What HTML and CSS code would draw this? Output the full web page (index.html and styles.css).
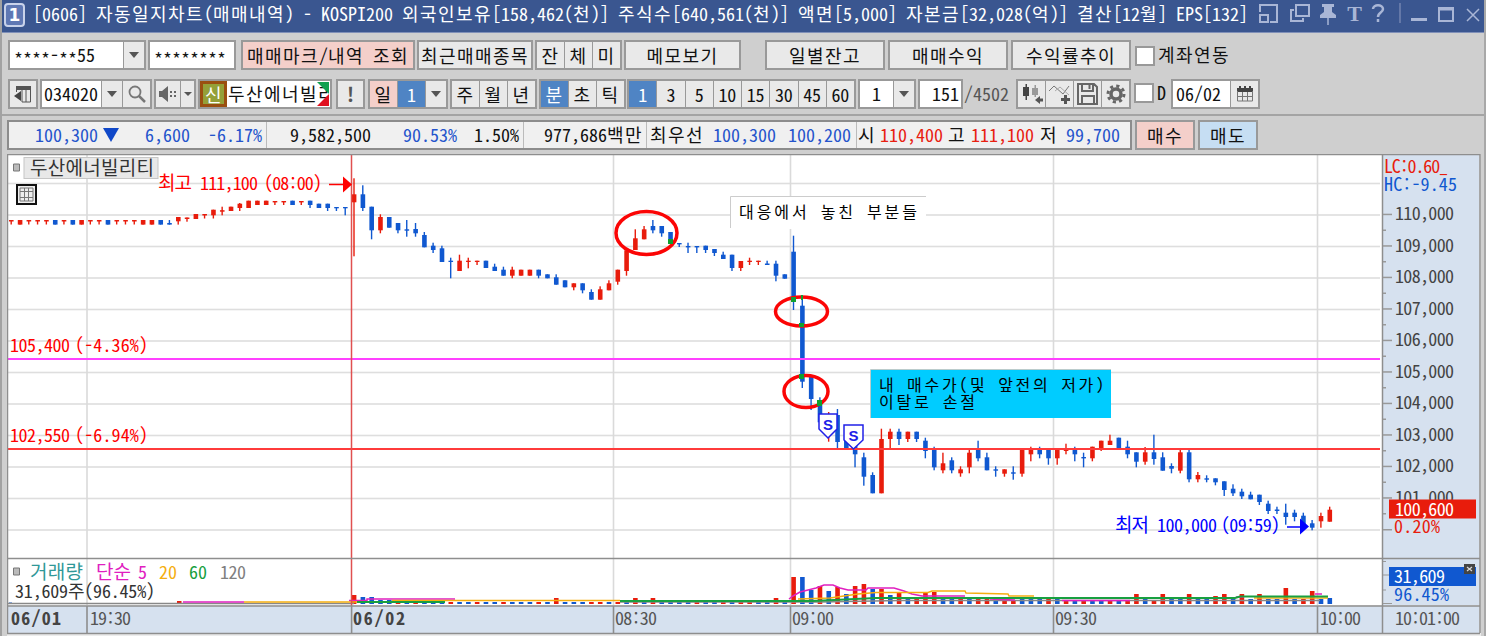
FILE: index.html
```
<!DOCTYPE html>
<html lang="ko">
<head>
  <meta charset="UTF-8">
  <title>자동일지차트(매매내역)</title>
  <link rel="stylesheet" href="styles.css">
</head>
<body>
  <div class="window">
    <!-- Title bar -->
    <header class="titlebar">
      <span class="win-no">1</span>
      <span class="title">[0606] 자동일지차트(매매내역) - KOSPI200 외국인보유[158,462(천)] 주식수[640,561(천)] 액면[5,000] 자본금[32,028(억)] 결산[12월] EPS[132]</span>
      <svg class="title-icons" width="228" height="32" viewBox="1258 0 228 32">
        <g fill="none" stroke="#a9b6d6" stroke-width="2">
          <path d="M1260 12V5h17v17h-7M1260 15h8v7h-8z"/>
          <path d="M1296 5h13v11h-13zM1294 10h-3v11h12v-3"/>
          <path d="M1328 17v8" stroke-width="1.5"/>
          <path d="M1373 9c0-5 10-5 10 0 0 4-5 3-5 8M1378 19v3" stroke-width="2.5"/>
          <path d="M1400 3v20" stroke="#7384b0" stroke-width="1.5"/>
          <path d="M1411 19.5h16" stroke-width="3"/>
          <path d="M1439 8h14v13h-14zM1439 9.500h14" />
          <path d="M1467 9l12 12M1479 9l-12 12" stroke-width="1.5"/>
        </g>
        <path fill="#a9b6d6" d="M1322 4h12v3h-2v5l4 3v3h-16v-3l4-3V7h-2z"/>
        <text class="title-t" x="1354.500" y="21">T</text>
      </svg>
    </header>

    <!-- Account row -->
    <div class="bar account-bar">
      <div class="group combo-account"><span class="field"><span class="stars">****</span>-<span class="stars">**</span>55</span><span class="drop"></span></div>
      <div class="group password"><span class="field"><span class="stars">********</span></span></div>
      <button class="btn pink w174">매매마크/내역 조회</button>
      <button class="btn w116">최근매매종목</button>
      <div class="group w87"><span class="cell">잔</span><span class="cell">체</span><span class="cell">미</span></div>
      <button class="btn w117">메모보기</button>
      <button class="btn w120 push">일별잔고</button>
      <button class="btn w120">매매수익</button>
      <button class="btn w120">수익률추이</button>
      <span class="check"></span><span class="check-label">계좌연동</span>
    </div>

    <!-- Chart tools row -->
    <div class="bar tool-bar">
      <div class="group w30"><span class="cell">
        <svg width="20" height="20" viewBox="0 0 20 20"><path d="M3 2h15v4H3z" fill="#555"/><path d="M3.500 8v-4M9 6v12M13 6v12M17.500 3v15H9" stroke="#555" fill="none"/><path d="M8 7v10l-7-5z" fill="#444"/></svg>
      </span></div>
      <div class="group code"><span class="field">034020</span><span class="drop"></span><span class="cell search">
        <svg width="20" height="20" viewBox="0 0 20 20"><circle cx="8" cy="8" r="5.500" fill="none" stroke="#777" stroke-width="1.800"/><path d="M12 12l6 6" stroke="#777" stroke-width="2.500"/></svg>
      </span></div>
      <div class="group sound"><span class="cell">
        <svg width="18" height="18" viewBox="0 0 18 18"><path d="M0 6h3l6-5v16l-6-5H0z" fill="#666"/><path d="M11 6h2v2h-2zM15 6h2v2h-2zM11 10h2v2h-2zM15 10h2v2h-2z" fill="#666"/></svg>
      </span><span class="drop small"></span></div>
      <div class="group stock"><span class="credit">신</span><span class="stock-name">두산에너빌리</span><i class="corner up"></i><i class="corner down"></i></div>
      <div class="group alert"><span class="cell">!</span></div>
      <div class="group day"><span class="cell pink">일</span><span class="cell on">1</span><span class="drop"></span></div>
      <div class="group w87"><span class="cell">주</span><span class="cell">월</span><span class="cell">년</span></div>
      <div class="group w87"><span class="cell on">분</span><span class="cell">초</span><span class="cell">틱</span></div>
      <div class="group minutes"><span class="cell on">1</span><span class="cell">3</span><span class="cell">5</span><span class="cell">10</span><span class="cell">15</span><span class="cell">30</span><span class="cell">45</span><span class="cell">60</span></div>
      <div class="group unit"><span class="field center">1</span><span class="drop"></span></div>
      <div class="group count"><span class="field right">151</span></div>
      <span class="total">/4502</span>
      <div class="group icons">
        <span class="cell"><svg width="24" height="24" viewBox="0 0 24 24"><path d="M3 5h6v9H3zM5.500 2h1.500v16H5.500z" fill="#444"/><path d="M12 6h6v7h-6zM14.500 3h1.500v12h-1.500z" fill="#999"/><path d="M15 18l5-4v2.500h3v3h-3V22z" fill="#555"/></svg></span>
        <span class="cell"><svg width="24" height="24" viewBox="0 0 24 24"><path d="M1 9l5-5 9 8 6-8" fill="none" stroke="#777"/><path d="M7 9l5-4 9 8" fill="none" stroke="#aaa"/><path d="M16 13h3v3h3v3h-3v3h-3v-3h-3v-3h3z" fill="#555"/></svg></span>
        <span class="cell"><svg width="24" height="24" viewBox="0 0 24 24"><path d="M2 2h16l3 3v17H2zM6 2v7h11V2M6 22v-8h12v8M13.500 3v4" fill="none" stroke="#666" stroke-width="2"/></svg></span>
        <span class="cell"><svg width="22" height="22" viewBox="0 0 22 22"><circle cx="11" cy="11" r="5" fill="none" stroke="#666" stroke-width="3.500"/><circle cx="11" cy="11" r="8" fill="none" stroke="#666" stroke-width="3" stroke-dasharray="3.140 3.140"/></svg></span>
      </div>
      <span class="check"></span><span class="check-label d">D</span>
      <div class="group date"><span class="field">06/02</span><span class="cell cal">
        <svg width="18" height="18" viewBox="0 0 18 18"><path d="M1 3h16v4H1zM3 1h2v3H3zM8 1h2v3H8zM13 1h2v3h-2z" fill="#444"/><path d="M1.500 6v10h15V6M6.500 7v9M11.500 7v9M2 11.500h14" fill="none" stroke="#777"/></svg>
      </span></div>
    </div>

    <!-- Quote row -->
    <div class="bar quote-bar">
      <div class="quotes">
        <span class="down">100,300</span><span class="tri"></span><span class="down">6,600</span><span class="down">-6.17%</span>
        <span class="sep">9,582,500</span><span class="down">90.53%</span><span>1.50%</span>
        <span class="sep amount">977,686백만</span>
        <span class="sep first">최우선</span><span class="down">100,300</span><span class="down">100,200</span>
        <span class="sep none">시</span><span class="up">110,400</span><span>고</span><span class="up">111,100</span><span>저</span><span class="down">99,700</span>
      </div>
      <button class="btn pink w60">매수</button>
      <button class="btn sky w60">매도</button>
    </div>

    <!-- Chart: user units are window pixels -->
    <svg class="chart" width="1474" height="482" viewBox="7 154 1474 482">
      <rect x="7" y="154" width="1474" height="482" fill="#ececec"/>
      <rect x="8" y="155" width="1374" height="450" fill="#fff"/>
      <rect x="1382" y="155" width="97" height="450" fill="#d6e1ef"/>
      <rect x="8" y="606" width="1471" height="27" fill="#d6e1ef"/>
      <g id="grid"></g>
      <g id="volume"></g>
      <g fill="none" stroke-width="1.500">
        <path stroke="#888" d="M8 603.500H354M620 602H820L900 600.500H1320"/>
        <path stroke="#e020c0" d="M183 602H244M349 600.500H367V599H455M789 599l4-3 7-4 8-2 8-2 8-3h9l7 3 8 2h18l2-2h26l10 3 8 3 10 2h43M990 599l25 1M1062 600.500h68M1236 597h8M1315 594h7"/>
        <path stroke="#f5ae10" d="M244 602H357M392 600.500H620M798 599l32-1 28-4 18-1.500h52l4-1.500h33l1 2 42 1 1 2h25M1254 598h74"/>
        <path stroke="#18a040" stroke-width="2" d="M357 602h88M620 601H813L876 598H1235L1240 596.500H1328"/>
      </g>
      <g id="candles"></g>

      <path d="M8 359H1380" stroke="#ff40ff" stroke-width="2"/>
      <path d="M8 449H1380" stroke="#ff3b3b" stroke-width="1.800"/>
      <path d="M351.500 155V606" stroke="#e05050" stroke-width="1.500"/>

      <!-- Frame lines -->
      <path d="M7 154.500H1480M7.500 154V633M1480 154V633M7 558.500H1480M7 606H1480M1382.500 155V633M7 633.500H1480" fill="none" stroke="#8e8e8e" stroke-width="1.500"/>

      <!-- Hand-drawn marks -->
      <g fill="none" stroke="#fb0505" stroke-width="3.500">
        <ellipse cx="646.500" cy="233" rx="30.500" ry="21.500"/>
        <ellipse cx="801.500" cy="311.500" rx="26" ry="14.500"/>
        <ellipse cx="806" cy="391.500" rx="22" ry="16"/>
      </g>
      <path fill="#10a030" d="M668 239h5v5h-5zM791 297h5v5h-5zM799 323h5v4h-5zM799 374h5v5h-5zM817 400h5v6h-5zM801 295h2v5h-2z"/>

      <!-- High and low arrows -->
      <path d="M329 184.500h15" stroke="#f00" stroke-width="1.500"/><path d="M343 176.500v16l9-8z" fill="#f00"/>
      <path d="M1287 527h14" stroke="#00f" stroke-width="1.500"/><path d="M1300 518.500v16l9-8z" fill="#00f"/>

      <!-- Sell flags -->
      <g fill="#fff" stroke="#2020e8" stroke-width="1.500">
        <path d="M819 414h18v15l-9 9-9-9z"/>
        <path d="M844 425h19v15l-9.500 9-9.500-9z"/>
      </g>
      <text class="flag" x="828" y="430">S</text>
      <text class="flag" x="853.500" y="441">S</text>

      <!-- Notes -->
      <rect x="731" y="197" width="195" height="32" fill="#fff"/>
      <path d="M730.500 228V196.500H926" fill="none" stroke="#ccc"/>
      <text class="note" x="739" y="218" textLength="178">대응에서 놓친 부분들</text>
      <rect x="870.500" y="370" width="240.500" height="48" fill="#0cf"/>
      <path d="M870.500 418V369.500H1111" fill="none" stroke="#bcc"/>
      <text class="note" x="879" y="391" textLength="225">내 매수가(및 앞전의 저가)</text>
      <text class="note" x="879" y="408" textLength="96">이탈로 손절</text>

      <!-- Labels -->
      <rect x="24" y="157.500" width="134" height="21" fill="#e8e8e8" stroke="#c6c6c6"/>
      <path d="M13.500 164h6v7h-6zM13.500 568h6v7h-6z" fill="#bbb" stroke="#777"/>
      <text class="lbl ko" x="30" y="174.500" textLength="124" fill="#333">두산에너빌리티</text>
      <rect x="17" y="185" width="19" height="19" fill="#eee" stroke="#111" stroke-width="2"/>
      <path d="M20 188h13v13H20zM20 191.500h13M20 197.500h13M24.500 188v13M28.500 188v13" fill="none" stroke="#777"/>
      <g fill="#f00">
        <text class="lbl ko" x="158" y="190" textLength="34">최고</text>
        <text class="lbl" x="200" y="190" textLength="58">111,100</text>
        <text class="lbl" x="264" y="190" textLength="58">(08:00)</text>
        <text class="lbl" x="10" y="352" textLength="60">105,400</text>
        <text class="lbl" x="75" y="352" textLength="73">(-4.36%)</text>
        <text class="lbl" x="10" y="442" textLength="60">102,550</text>
        <text class="lbl" x="75" y="442" textLength="73">(-6.94%)</text>
      </g>
      <g fill="#00f">
        <text class="lbl ko" x="1115" y="532" textLength="34">최저</text>
        <text class="lbl" x="1157" y="532" textLength="60">100,000</text>
        <text class="lbl" x="1221" y="532" textLength="59">(09:59)</text>
      </g>
      <text class="lbl ko" x="30" y="578.500" textLength="53" fill="#309898">거래량</text>
      <text class="lbl ko" x="96" y="578.500" textLength="35" fill="#e020c0">단순</text>
      <text class="lbl" x="138" y="578.500" fill="#e020c0">5</text>
      <text class="lbl" x="159" y="578.500" textLength="18" fill="#f5ae10">20</text>
      <text class="lbl" x="189" y="578.500" textLength="18" fill="#18a040">60</text>
      <text class="lbl" x="220" y="578.500" textLength="26" fill="#808080">120</text>
      <text class="lbl" x="15" y="598" textLength="140" fill="#333">31,609주(96.45%)</text>

      <!-- Price axis -->
      <g id="axis"></g>
      <text class="lbl" x="1384" y="173" textLength="64" fill="#e81c0c">LC:0.60_</text>
      <text class="lbl" x="1384" y="191" textLength="73" fill="#1058d0">HC:-9.45</text>
      <rect x="1389" y="499.500" width="87" height="19" fill="#e81c0c"/>
      <text class="lbl" x="1395" y="515.500" textLength="59" fill="#fff">100,600</text>
      <text class="lbl" x="1394" y="533" textLength="46" fill="#e81c0c">0.20%</text>
      <rect x="1389" y="567" width="87" height="19" fill="#1058d0"/>
      <text class="lbl" x="1394" y="582.500" textLength="51" fill="#fff">31,609</text>
      <text class="lbl" x="1394" y="600.500" textLength="55" fill="#1058d0">96.45%</text>
      <rect x="1464" y="564" width="11" height="10" fill="#444"/>
      <path d="M1467 567l5 4M1472 567l-5 4" stroke="#ddd" stroke-width="1.200"/>
      <path d="M1383 561.500h3M1383 575h6M1383 590h3M1383 603.500h9" stroke="#999"/>

      <!-- Time axis -->
      <text class="lbl bold" x="11" y="624.500" textLength="50">06/01</text>
      <text class="lbl" x="90" y="624.500" textLength="41" fill="#555">19:30</text>
      <text class="lbl bold" x="353" y="624.500" textLength="52">06/02</text>
      <text class="lbl" x="615" y="624.500" textLength="42" fill="#555">08:30</text>
      <text class="lbl" x="792" y="624.500" textLength="42" fill="#555">09:00</text>
      <text class="lbl" x="1055" y="624.500" textLength="42" fill="#555">09:30</text>
      <text class="lbl" x="1320" y="624.500" textLength="41" fill="#555">10:00</text>
      <text class="lbl" x="1395" y="624.500" textLength="65" fill="#555">10:01:00</text>
    </svg>
  </div>
  <script src="chart.js"></script>
</body>
</html>
```
FILE: styles.css
```
* {
  box-sizing: border-box;
}
body {
  margin: 0;
  background: #cfcfcf;
  font: 18px/1 "Noto Sans Mono CJK KR", "Noto Sans CJK KR", monospace;
  color: #111;
}
.window {
  width: 1486px;
  height: 636px;
  overflow: hidden;
  border-left: 2px solid #a2a2a2;
  border-right: 2px solid #a8a8a8;
  background: #cfcfcf;
}
.titlebar {
  display: flex;
  align-items: center;
  height: 33px;
  margin: 0 -2px;
  padding-left: 4px;
  background: #3a5690;
  border-bottom: 1px solid #8090b8;
  color: #fff;
}
.win-no {
  width: 21px;
  height: 24px;
  margin: 0 8px 2px 0;
  border: 2px solid #c8d2ea;
  border-radius: 4px;
  background: #5f78b4;
  font: bold 17px/20px "DejaVu Sans", sans-serif;
  text-align: center;
}
.title {
  width: 1225px;
  height: 26px;
  line-height: 20px;
  white-space: pre;
}
.title-icons {
  flex: none;
}
.title-t {
  font: bold 22px "Liberation Serif", serif;
  fill: #a9b6d6;
  text-anchor: middle;
}
/* full-width Hangul: two digits per syllable */
.wide {
  letter-spacing: 0.08em;
}

/* Toolbars */
.bar {
  display: flex;
  height: 30px;
  padding-left: 6px;
}
.account-bar {
  margin-top: 7px;
  gap: 2px;
}
.tool-bar {
  margin-top: 9px;
  gap: 2px;
}
.quote-bar {
  margin-top: 5px;
  padding: 4px 0 0 5px;
  height: 40px;
  border-top: 2px solid #a4a4a4;
  gap: 3px;
}
.btn {
  flex: none;
  height: 30px;
  padding: 0;
  border: 2px solid #999;
  background: #e9e9e9;
  font: inherit;
  color: #111;
  white-space: nowrap;
}
.pink {
  background: #f4cfca;
}
.sky {
  background: #c6def3;
}
.w30 { width: 30px; }
.w60 { width: 60px; }
.w87 { width: 87px; }
.w116 { width: 116px; }
.w117 { width: 117px; }
.w120 { width: 120px; }
.w174 { width: 174px; margin-left: 3px; }
.w120 + .w120 { margin-left: 1px; }
.push {
  margin-left: 22px;
}
.group {
  display: flex;
  flex: none;
  height: 30px;
  border: 2px solid #999;
  background: #e9e9e9;
}
.field {
  flex: 1;
  padding-left: 4px;
  background: #fff;
  line-height: 25px;
  white-space: nowrap;
}
.stars {
  vertical-align: -4px;
  line-height: 1;
}
.cell {
  display: flex;
  flex: 1;
  align-items: center;
  justify-content: center;
}
.cell + .cell, .drop, .search, .cal {
  border-left: 1px solid #999;
}
.drop {
  display: flex;
  flex: none;
  align-items: center;
  justify-content: center;
  width: 21px;
  background: #e9e9e9;
}
.drop::before {
  content: "";
  border: 5px solid transparent;
  border-top: 6px solid #555;
  border-bottom: 0;
}
.small {
  width: 14px;
}
.small::before {
  border-width: 4px 4px 0;
}
.on {
  background: #4f84c4;
  color: #fff;
}
.center {
  padding-left: 12px;
}
.right {
  padding: 0 2px 0 0;
  text-align: right;
}
.combo-account { width: 138px; }
.password { width: 88px; }
.code { width: 112px; }
.code .field { padding-left: 2px; }
.code .search, .cal { flex: none; width: 28px; }
.sound { width: 42px; }
.day { width: 80px; }
.unit { width: 58px; }
.count { width: 45px; }
.minutes { width: 229px; margin-left: -1px; }
.icons { width: 115px; }
.date { width: 89px; margin-left: 1px; }
.date .field { padding-left: 3px; }
.alert {
  width: 29px;
  margin: 0 1px 0 2px;
  color: #555;
  font-size: 20px;
  font-weight: bold;
}
.stock {
  position: relative;
  width: 134px;
  background: #fff;
  overflow: hidden;
}
.credit {
  flex: none;
  width: 27px;
  border: 3px solid #9a4f10;
  background: #94a038;
  color: #fff;
  line-height: 20px;
  text-indent: 2px;
}
.stock-name {
  width: 101px;
  margin-left: 1px;
  overflow: hidden;
  line-height: 24px;
  white-space: nowrap;
}
.corner {
  position: absolute;
  right: 1px;
  border: 6px solid transparent;
}
.corner.up {
  top: 1px;
  border-top-color: #10a050;
  border-right-color: #10a050;
}
.corner.down {
  bottom: 1px;
  border-bottom-color: #e01020;
  border-right-color: #e01020;
}
.total {
  width: 50px;
  margin-left: -1px;
  line-height: 29px;
  color: #555;
}
.check {
  flex: none;
  width: 20px;
  height: 20px;
  margin: 6px 0 0 2px;
  border: 2px solid #999;
  background: #fff;
}
.icons + .check {
  margin: 4px 0 0 1px;
}
.check-label {
  margin-left: 1px;
  line-height: 29px;
  white-space: nowrap;
}
.d {
  width: 11px;
  line-height: 27px;
}

/* Quotes */
.quotes {
  display: grid;
  grid-template-columns: 66px 44px 63px 57px 138px 71px 48px 123px 68px 75px 67px 25px 68px 23px 69px 26px 66px;
  flex: none;
  width: 1125px;
  height: 30px;
  padding-left: 26px;
  border: 2px solid #8c8c8c;
  background: #f0f0f0;
  line-height: 25px;
  white-space: nowrap;
}
.up { color: #e82010; }
.down { color: #2454cc; }
.tri {
  width: 0;
  height: 0;
  margin: 6px 0 0 2px;
  border: 8px solid transparent;
  border-top: 14px solid #1048c8;
  border-bottom: 0;
}
.sep {
  margin-left: 1px;
  border-left: 1px solid #bbb;
  padding-left: 23px;
}
.amount { padding-left: 20px; }
.first { padding-left: 3px; }
.none { padding-left: 1px; }

/* Chart */
.chart {
  display: block;
  margin-left: 5px;
}
.lbl {
  font-size: 18px;
}
.ko {
  font-size: 19px;
}
.bold {
  font-weight: bold;
  fill: #444;
}
.note {
  font-size: 16px;
  fill: #000;
}
.flag {
  font: bold 15px "Liberation Sans", sans-serif;
  fill: #2020e8;
  text-anchor: middle;
}
.tick {
  fill: #444;
}
```
FILE: chart.js
```
const NS = 'http://www.w3.org/2000/svg';
const RED = '#e81c0c';
const BLUE = '#1058d0';
const STEP = 8.79;

function add(id, tag, attrs, text) {
  const el = document.createElementNS(NS, tag);
  for (const key in attrs) el.setAttribute(key, attrs[key]);
  if (text) el.textContent = text;
  document.getElementById(id).appendChild(el);
}

function rect(id, x, y, w, h, fill) {
  add(id, 'rect', { x: x, y: y, width: w, height: h, fill: fill });
}

// Hangul in the bars takes a full em
document.querySelectorAll('.title, .btn, .cell, .check-label, .credit, .stock-name, .quotes span').forEach(el => {
  if (el.children.length) return;
  el.innerHTML = '<span>' + el.textContent.replace(/[가-힣]+/g, '<span class="wide">$&</span>') + '</span>';
});

// color, wick top, body top, body bottom, wick bottom
const T = 'r 220 220 221.5 224.5';
const R = 'r 220 220 224.6 224.6';
const B = 'b 220 220 224.6 224.6';
const candles = [
  T, R, T, T, T, B, T, B, R, T, T, B, T, T, T, R, R, B,
  'b 220 223 224.6 224.6', 'r 217 217 221.3 224.6', 'r 217.5 217.5 219 221.7', 'r 214 214 219 219',
  'r 214 214 215.5 218.5', 'r 209.7 209.7 215.3 218.5', 'r 206.7 210.2 211.7 215.3', 'r 206.7 206.7 211 211',
  'r 203 203.7 208 211', 'r 200.7 200.7 208 208', 'r 200.7 200.7 205 205', 'r 200.7 200.7 205 205',
  'r 201 201 202.4 205', 'r 201 201 202.4 205', 'b 200.7 200.7 205 205', 'r 201 201 202.4 205',
  'b 200.7 200.7 205 208', 'b 203.7 203.7 208 208', 'b 203.7 203.7 208 211', 'b 207 207 208.3 211', 'b 207 207 208.3 215.3',
  // 08:00
  'r 178.3 194.3 202.3 256.3', 'b 185.3 194.3 208 211', 'b 206.7 206.7 230.3 239.3', 'r 214.3 217 230.3 233.3',
  'b 217 217 227.7 227.7', 'b 223 223 230.3 233.3', 'b 220 229.3 230.7 236.7', 'b 223 229 233.3 236.7',
  'b 232 235 247.3 247.3', 'b 242.7 245.7 250 253', 'b 245.7 248.3 262 262', 'b 257.7 260.7 262 278.3',
  'r 254.7 260.7 271 271', 'r 257.7 260.7 262 268.3', 'r 260.7 260.7 262 265', 'b 260.7 260.7 268 268',
  'b 263.7 266.7 271 271', 'b 266.7 269.7 275.7 275.7', 'r 266.7 269.7 275.7 278.3', 'r 269.7 269.7 275.7 275.7',
  'r 269.7 269.7 275.7 275.7', 'b 269.7 269.7 275.7 278.3', 'b 274.3 274.3 278.3 278.3', 'b 274.3 277.3 284.7 284.7',
  'b 280.3 280.3 287.3 287.3', 'r 283.3 283.3 287.3 290.3', 'b 283.3 283.3 290.3 293.3', 'b 289.3 292 299.7 299.7',
  'r 286.3 289.3 299.7 299.7', 'r 280.3 283.3 290.3 290.3',
  // 08:30
  'r 269.7 269.7 281.7 284.7', 'r 250.3 250.3 271 275.7', 'r 229.3 238.3 250 250', 'r 226 229.3 239.3 239.3',
  'b 220 226 230.3 233.3', 'b 226 226 233.3 236.7', 'b 232 232 243.3 243.3', 'b 243 243 244.4 247',
  'b 242.7 246 247.4 253', 'b 246 246 247.4 253', 'b 245.7 245.7 250 253', 'b 249 249 253 256',
  'b 251.7 254.7 259 259', 'b 254.7 254.7 268 271', 'r 261 261 268 271', 'r 257.7 260.7 262 265',
  'r 260.7 260.7 262 265', 'b 260.7 263.5 265 265', 'b 260.7 263.7 275.7 281.3', 'b 274.3 274.3 278.7 278.7',
  // 09:00
  'b 235.7 251.7 302 310', 'b 296 305.7 381.7 388', 'b 376.7 376.7 399 410', 'b 397.3 400 422.3 422.3',
  'r 412 418 430 441.7', 'b 409 415 442 448.7', 'b 440 440 448 448', 'b 440 440 454.3 467.3',
  'b 452.7 457.3 476.7 485.7', 'b 472.3 475 493.3 493.3', 'r 428.7 439 493.3 493.3', 'r 428.7 431.7 439 448.7',
  'b 428.7 431.7 439 445', 'r 431.7 431.7 439 442', 'b 431.7 431.7 439 442', 'b 437.7 440.7 451 458.3',
  'b 446.7 448.7 467.3 470.3', 'r 452.7 463.3 470.3 473.3', 'b 457.3 460.3 470.3 473.3', 'r 466.3 469.3 473.3 476.7',
  'r 449.7 452.7 467.3 473.3', 'b 440.7 448.7 458.3 461.3', 'b 452.7 457.3 470.3 470.3', 'b 466.3 469.3 470.7 476.7',
  'r 469.3 469.3 473.7 476.7', 'b 466.3 472.3 473.7 479.7', 'r 448.7 448.7 473.7 476.7', 'r 446.7 448.7 454.3 461.3',
  'b 446.7 448.7 454.3 458.3', 'b 448.7 448.7 458.3 464.7',
  // 09:30
  'r 448.7 448.7 458.3 464.7', 'r 443.7 448.7 451 454.3', 'b 446.7 448.7 454.3 461.3', 'b 452.7 457 458.4 467.3',
  'r 446.7 446.7 458.3 461.3', 'r 440.7 440.7 449.3 451', 'r 434.7 440.7 445 445', 'b 437.7 437.7 448.7 448.7',
  'b 440.7 446.7 454.3 458.3', 'b 452.3 452.3 461.7 467.3', 'r 447 452.3 461.7 464.7', 'b 434.7 452.3 459 464.7',
  'b 452.3 457.3 470.7 470.7', 'b 463.3 466 468.7 473.3', 'r 449.3 452.3 470.7 473.3', 'b 449.3 452.3 479.3 482.3',
  'r 472 475 479.3 482.3', 'b 475.3 478.3 479.7 482.3', 'b 478.3 478.3 482.3 485.3', 'b 481.3 481.3 490 496',
  'b 484.3 488.7 493.3 496', 'b 488.7 491.7 496.3 499', 'b 491.7 494.7 499.3 499.3', 'b 494.7 494.7 502 505',
  'b 500.7 503.7 511 514', 'b 506.7 509.5 511 514', 'b 503.7 512.7 517 524.7', 'b 509.7 512.7 517 521.3',
  'b 512.7 515.7 525 530', 'b 520 523.3 527.7 530.3',
  // 10:00
  'r 512.7 516 521.3 527.7', 'r 506.7 509.7 521.7 521.7'
];

// volume bars from 08:00, color + height
const volumes = ('r9 b7 b7 b4 b4 r2 b2 r2 b2 b2 b2 r2 b2 b2 r2 b2 b2 r2 b2 b2 b2 r2 b2 r6 b2 b2 b2 r2 r2 b2 ' +
  'r2 b2 r6 b2 r6 b2 b2 b2 b2 r2 b2 b2 r2 b2 r2 r2 b2 b2 r6 b2 ' +
  'r27 b27 b14 r18 b13 r17 b10 r18 r20 b15 r15 b9 r11 b6 r5 r11 r12 b7 b6 r6 b7 r5 r5 b5 r3 r3 b5 b5 b5 r5 ' +
  'b5 r3 b3 r3 b3 b3 r3 b3 r3 r10 b5 r4 r10 b5 b5 r10 b5 b5 r8 r10 b5 r10 b5 r10 b5 b5 r16 b5 r5 r13 b5 b6').split(' ');

// Grid
for (let i = 0; i < 12; i++) {
  rect('grid', 8, 183 + i * 31.5 - 0.3, 1372, 1.6, '#dedede');
}
[87, 613.5, 790.5, 1053.5, 1317.5].forEach(x => {
  rect('grid', x - 0.8, 155, 1.6, 450, '#dadada');
  rect('grid', x - 0.8, 606, 1.6, 27, '#8e8e8e');
});
rect('grid', 350.8, 606, 1.6, 27, '#8e8e8e');

candles.forEach((row, n) => {
  const [c, top, open, close, low] = row.split(' ');
  const x = 354 + (n - 39) * STEP;
  const fill = c === 'r' ? RED : BLUE;
  rect('candles', x - 0.7, +top, 1.4, low - top, fill);
  rect('candles', x - 2.2, +open, 4.6, close - open, fill);
});

volumes.forEach((v, n) => {
  const h = +v.slice(1);
  rect('volume', 351.8 + n * STEP, 604 - h, 4.6, h, v[0] === 'r' ? RED : BLUE);
});
rect('volume', 177, 601, 4.5, 2, RED);
rect('volume', 9, 602.5, 3, 1.5, BLUE);

// Price axis
for (let p = 110; p > 100; p--) {
  const y = 214.5 + (110 - p) * 31.5;
  rect('axis', 1383, y - 0.8, 9, 1.5, '#999');
  rect('axis', 1383, y + 15, 3, 1.5, '#999');
  add('axis', 'text', { x: 1395, y: y + 5.5, textLength: 59, class: 'lbl tick' }, p + ',000');
}
rect('axis', 1383, 529, 9, 1.5, '#999');
```
